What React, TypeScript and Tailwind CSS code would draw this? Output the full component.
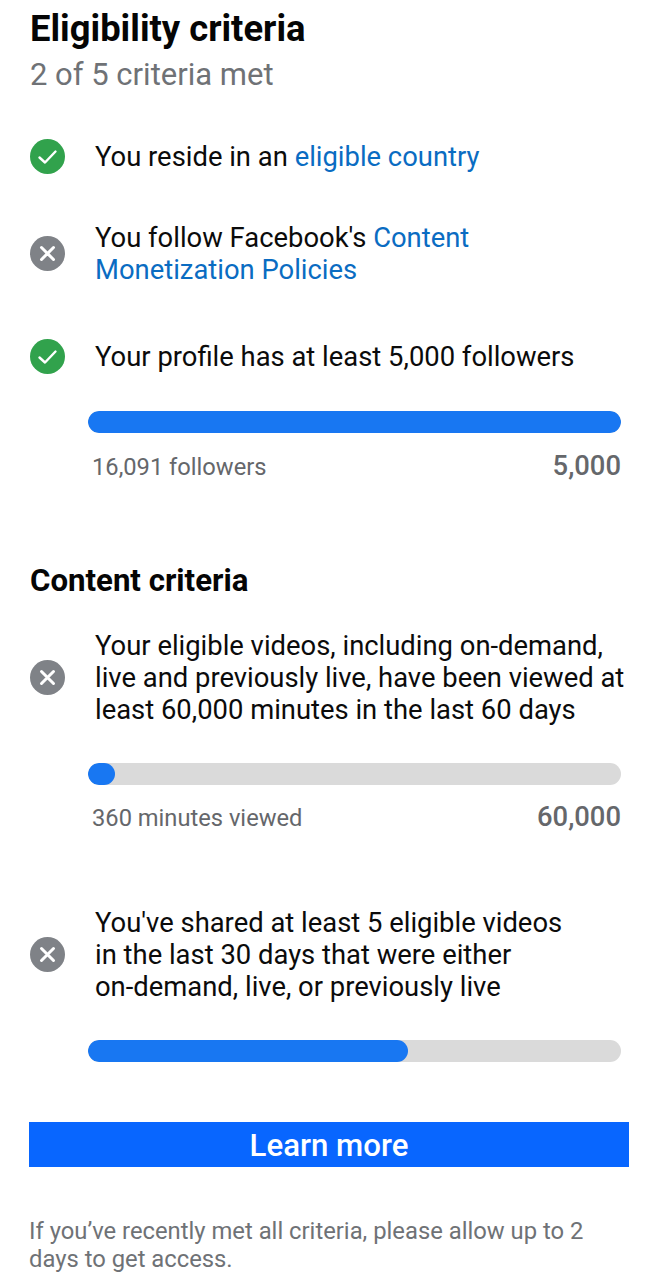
import React from "react";

function Check() {
  return (
    <svg width="35" height="35" viewBox="0 0 35 35" className="shrink-0 -translate-y-[1px]">
      <circle cx="17.5" cy="17.5" r="17.5" fill="#31a24c" />
      <path d="M9.5 18.5l5.5 5 10.5-11" fill="none" stroke="#fff" strokeWidth="2.4" strokeLinecap="round" strokeLinejoin="round" />
    </svg>
  );
}
function Cross() {
  return (
    <svg width="35" height="35" viewBox="0 0 35 35" className="shrink-0 -translate-y-[1px]">
      <circle cx="17.5" cy="17.5" r="17.5" fill="#7f8287" />
      <path d="M11.5 11.5l12 12M23.5 11.5l-12 12" fill="none" stroke="#fff" strokeWidth="3" strokeLinecap="round" />
    </svg>
  );
}
function Bar({ pct, className = "" }: { pct: number; className?: string }) {
  return (
    <div className={"ml-[88px] mr-[37px] h-[22px] rounded-full bg-[#dadada] overflow-hidden " + className}>
      <div className="h-full rounded-full bg-[#1877f2]" style={{ width: pct + "%" }} />
    </div>
  );
}
function Row({ icon, children, className = "" }: { icon: React.ReactNode; children: React.ReactNode; className?: string }) {
  return (
    <div className={"flex items-center min-h-[36px] pl-[30px] " + className}>
      {icon}
      <div className="ml-[30px] text-[27.4px] leading-[32px] text-[#0b0b0b] whitespace-nowrap">{children}</div>
    </div>
  );
}
function Stats({ left, right, className = "" }: { left: string; right: string; className?: string }) {
  return (
    <div className={"flex items-center justify-between pl-[92px] pr-[37px] text-[#65676b] " + className}>
      <span className="mt-[2px] text-[23.7px] leading-[28px]">{left}</span>
      <span className="text-[27.4px] leading-[32px] font-medium">{right}</span>
    </div>
  );
}
const Link = ({ children }: { children: React.ReactNode }) => <span className="text-[#0a6cc2]">{children}</span>;

export default function App() {
  return (
    <div className="w-[658px] h-[1280px] overflow-hidden bg-white pt-[9px] font-['Roboto',sans-serif]">
      <h1 className="pl-[30px] text-[36.4px] leading-[40px] font-bold text-[#050505]">Eligibility criteria</h1>
      <p className="pl-[30px] mt-[8px] text-[31px] leading-[36px] text-[#6f7276]">2 of 5 criteria met</p>

      <Row icon={<Check />} className="mt-[46px]">
        You reside in an <Link>eligible country</Link>
      </Row>
      <Row icon={<Cross />} className="mt-[47px]">
        You follow Facebook's <Link>Content</Link>
        <br />
        <Link>Monetization Policies</Link>
      </Row>
      <Row icon={<Check />} className="mt-[53px]">
        Your profile has at least 5,000 followers
      </Row>
      <Bar pct={100} className="mt-[36px]" />
      <Stats left="16,091 followers" right="5,000" className="mt-[17px]" />

      <h2 className="pl-[30px] mt-[82px] text-[31.2px] leading-[34px] font-bold text-[#050505]">Content criteria</h2>

      <Row icon={<Cross />} className="mt-[32px]">
        Your eligible videos, including on-demand,
        <br />
        live and previously live, have been viewed at
        <br />
        least 60,000 minutes in the last 60 days
      </Row>
      <Bar pct={5} className="mt-[37px]" />
      <Stats left="360 minutes viewed" right="60,000" className="mt-[16px]" />

      <Row icon={<Cross />} className="mt-[74px]">
        You've shared at least 5 eligible videos
        <br />
        in the last 30 days that were either
        <br />
        on-demand, live, or previously live
      </Row>
      <Bar pct={60} className="mt-[37px]" />

      <button className="block ml-[29px] mt-[60px] w-[600px] h-[45px] bg-[#0866ff] text-white text-[31.2px] leading-[47px] font-medium text-center">
        Learn more
      </button>
      <p className="pl-[29px] mt-[50px] text-[23.8px] leading-[28px] text-[#6f7276]">
        If you’ve recently met all criteria, please allow up to 2
        <br />
        days to get access.
      </p>
    </div>
  );
}
